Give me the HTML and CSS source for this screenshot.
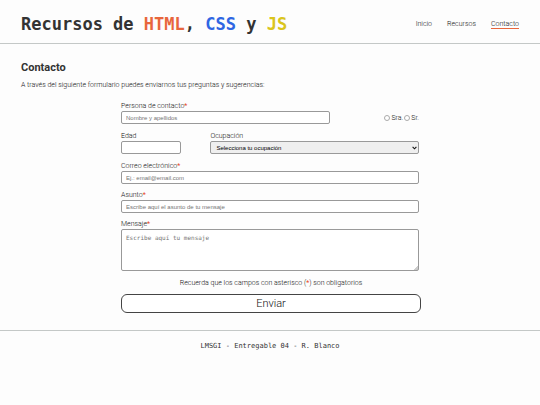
FILE: index.html
```
<!DOCTYPE html>
<html lang="es">
<head>
    <meta charset="UTF-8">
    <meta name="viewport" content="width=device-width, initial-scale=1.0">
    <title>Contacto</title>
    <link rel="stylesheet" href="styles.css">
</head>
<body>

    <header class="cabecera">
        <h1>Recursos de <span class="html">HTML</span>, <span class="css">CSS</span> y <span class="js">JS</span></h1>
        <nav class="menu">
            <a href="#">Inicio</a>
            <a href="#">Recursos</a>
            <a href="#" class="activo">Contacto</a>
        </nav>
    </header>

    <main>
        <h2>Contacto</h2>
        <p>A través del siguiente formulario puedes enviarnos tus preguntas y sugerencias:</p>

        <form class="formulario">
            <!-- Datos personales -->
            <div class="fila">
                <div class="campo ancho">
                    <label for="nombre">Persona de contacto<span class="oblig">*</span></label>
                    <input type="text" id="nombre" placeholder="Nombre y apellidos">
                </div>
                <div class="tratamiento">
                    <input type="radio" id="sra" name="tratamiento">
                    <label for="sra">Sra.</label>
                    <input type="radio" id="sr" name="tratamiento">
                    <label for="sr">Sr.</label>
                </div>
            </div>
            <div class="fila">
                <div class="campo corto">
                    <label for="edad">Edad</label>
                    <input type="text" id="edad">
                </div>
                <div class="campo ancho">
                    <label for="ocupacion">Ocupación</label>
                    <div class="desplegable">
                        <select id="ocupacion">
                            <option>Selecciona tu ocupación</option>
                        </select>
                        <svg viewBox="0 0 5 4" aria-hidden="true"><path d="M0.6 0.8L2.5 2.8L4.4 0.8" fill="none" stroke="#111" stroke-width="1.1"/></svg>
                    </div>
                </div>
            </div>

            <!-- Mensaje -->
            <div class="grupo">
                <div class="campo">
                    <label for="correo">Correo electrónico<span class="oblig">*</span></label>
                    <input type="email" id="correo" placeholder="Ej.: email@email.com">
                </div>
                <div class="campo">
                    <label for="asunto">Asunto<span class="oblig">*</span></label>
                    <input type="text" id="asunto" placeholder="Escribe aquí el asunto de tu mensaje">
                </div>
                <div class="campo">
                    <label for="mensaje">Mensaje<span class="oblig">*</span></label>
                    <textarea id="mensaje" placeholder="Escribe aquí tu mensaje"></textarea>
                </div>
            </div>

            <p class="nota">Recuerda que los campos con asterisco (<span class="oblig">*</span>) son obligatorios</p>
            <button type="submit">Enviar</button>
        </form>
    </main>

    <footer>LMSGI - Entregable 04 - R. Blanco</footer>

</body>
</html>
```
FILE: styles.css
```
* {
    box-sizing: border-box;
}
body {
    margin: 0;
    background-color: #fdfdfd;
    color: #111;
    font-family: Roboto, sans-serif;
    font-size: 7px;
    font-weight: 300;
    line-height: 12px;
}
h1, h2, p {
    margin: 0;
}
h1, h2 {
    color: #333;
}
.cabecera {
    display: flex;
    justify-content: space-between;
    align-items: center;
    padding: 12px 21px 7px;
    border-bottom: 1px solid #c4c8c7;
}
h1 {
    font-family: "DejaVu Sans Mono", monospace;
    font-size: 17px;
    line-height: 24px;
}
.html {
    color: #e8663c;
}
.css {
    color: #2f66e3;
}
.js {
    color: #dac51d;
}
.menu {
    display: flex;
    gap: 15px;
    margin-top: 1px;
}
.menu a {
    color: #111;
    text-decoration: none;
    line-height: 8px;
    border-bottom: 1px solid transparent;
}
.menu .activo {
    border-bottom-color: #e8663c;
}
main {
    padding: 17px 19px 17px 21px;
}
h2 {
    font-size: 11px;
    line-height: 14px;
    margin-bottom: 4px;
}
.formulario {
    display: flex;
    flex-direction: column;
    gap: 5px;
    width: 60%;
    margin: 8px auto 0;
}
.fila {
    display: flex;
    justify-content: space-between;
    align-items: flex-end;
    padding-right: 2px;
}
.grupo {
    display: flex;
    flex-direction: column;
    gap: 4px;
    padding-right: 2px;
}
.campo {
    display: flex;
    flex-direction: column;
}
.campo label {
    padding-top: 2px;
    line-height: 10px;
}
.ancho {
    width: 70%;
}
.corto {
    width: 20%;
}
.oblig {
    color: #e8441c;
    font-weight: 400;
}
.campo input,
.campo select,
.campo textarea {
    width: 100%;
    height: 13px;
    margin: 0;
    padding: 0 4px;
    border: 1px solid #999;
    border-radius: 2px;
    background-color: #fff;
    color: #222;
    font-family: "Liberation Sans", Arial, sans-serif;
    font-size: 6px;
}
.desplegable {
    display: flex;
    position: relative;
}
.campo select {
    appearance: none;
    padding: 0 5px;
    background-color: #efefef;
    color: #000;
}
/* flecha del desplegable */
.desplegable svg {
    position: absolute;
    top: 5px;
    right: 2px;
    width: 5px;
    height: 4px;
    pointer-events: none;
}
.campo textarea {
    height: 42px;
    padding: 4px;
    resize: none;
    background-image: linear-gradient(135deg, transparent 50%, #ccc 50%);
    background-position: right bottom;
    background-repeat: no-repeat;
    background-size: 4px 4px;
    font-family: "DejaVu Sans Mono", monospace;
}
::placeholder {
    color: #757575;
}
.tratamiento {
    display: flex;
    align-items: center;
    gap: 1px;
}
.tratamiento input {
    appearance: none;
    width: 6px;
    height: 6px;
    margin: 0;
    border: 1px solid #aaa;
    border-radius: 50%;
    background-color: #fff;
}
.tratamiento input:checked {
    background-color: #2f66e3;
}
.nota {
    padding-top: 2px;
    line-height: 11px;
    text-align: center;
}
button {
    height: 19px;
    padding: 0;
    border: 1px solid #444;
    border-radius: 6px;
    background-color: #fff;
    color: #111;
    font-family: Roboto, sans-serif;
    font-size: 11px;
    font-weight: 300;
}
footer {
    padding: 9px 0;
    border-top: 1px solid #c4c8c7;
    color: #333;
    font-family: "DejaVu Sans Mono", monospace;
    font-weight: 400;
    text-align: center;
}
```
